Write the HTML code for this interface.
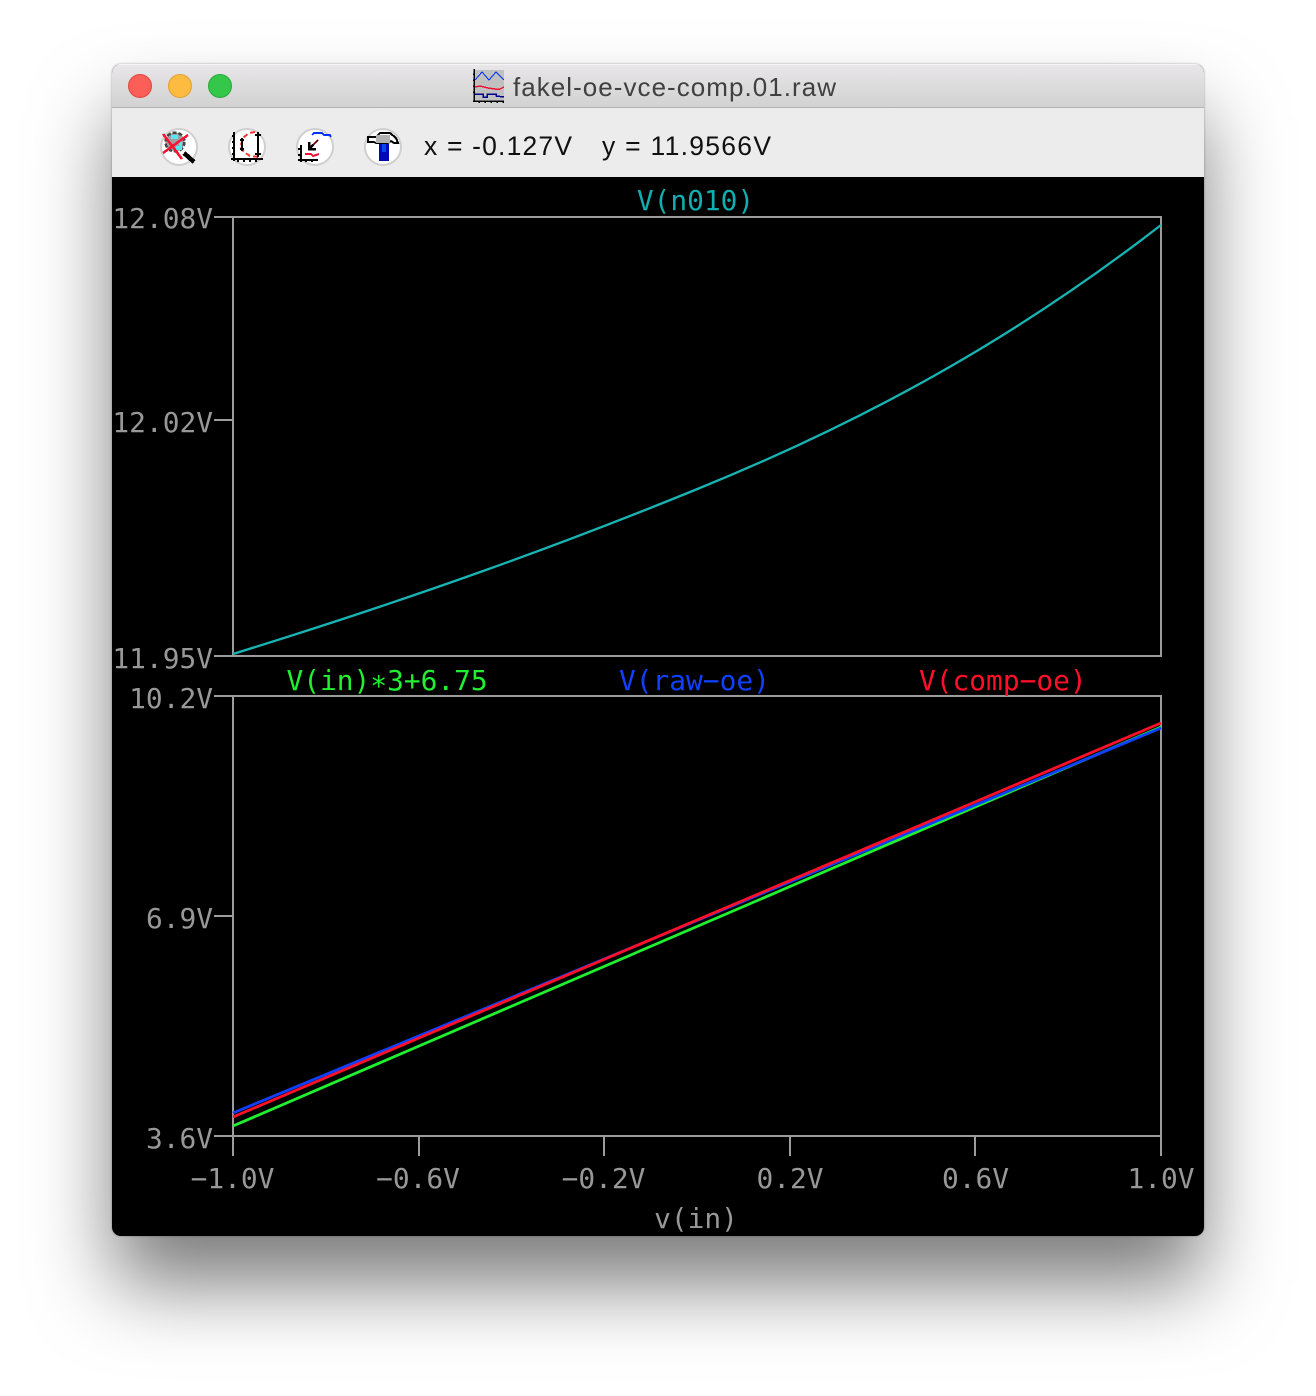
<!DOCTYPE html>
<html><head><meta charset="utf-8"><title>fakel-oe-vce-comp.01.raw</title>
<style>
html,body{margin:0;padding:0;background:#fff;}
body{width:1316px;height:1396px;position:relative;overflow:hidden;}
#win{position:absolute;left:112px;top:64px;width:1092px;height:1172px;border-radius:9px;background:#000;box-shadow:0 50px 80px -2px rgba(0,0,0,.52),0 0 2px rgba(0,0,0,.35);overflow:hidden;}
#tb{position:absolute;left:0;top:0;width:1092px;height:43px;background:linear-gradient(#e9e7e9,#d2d2d2);border-bottom:1px solid #b2b2b2;box-shadow:inset 0 1px 0 #f4f4f4;}
#bar{position:absolute;left:0;top:44px;width:1092px;height:69px;background:#ececec;}
svg{position:absolute;left:0;top:0;}
.m{font-family:"DejaVu Sans Mono","Liberation Mono",monospace;font-size:27.85px;}
.s{font-family:"Liberation Sans",sans-serif;}
.g{fill:#989898;}
</style></head><body>
<div id="win"><div id="tb"></div><div id="bar"></div></div>
<svg width="1316" height="1396" viewBox="0 0 1316 1396">
<!-- traffic lights -->
<circle cx="140" cy="86" r="11.5" fill="#fc5f58" stroke="#e2463f" stroke-width="1"/>
<circle cx="180" cy="86" r="11.5" fill="#fdbc40" stroke="#e1a02f" stroke-width="1"/>
<circle cx="220" cy="86" r="11.5" fill="#34c749" stroke="#28a93a" stroke-width="1"/>
<!-- title icon -->
<g shape-rendering="crispEdges" fill="none">
<rect x="475" y="70" width="29" height="30" fill="#c0c0c0"/>
<path d="M474 69V102M473 101H504M473 74h2M473 80h2M473 86h2M473 92h2M479 101v2M485 101v2M491 101v2M497 101v2M503 101v2" stroke="#000" stroke-width="1.5"/>
<polyline points="475,80 482,72 489,80 496,72 504,80" stroke="#0030ff" stroke-width="1"/>
<polyline points="475,87 480,86 488,88 495,89 500,89 504,87" stroke="#f01030" stroke-width="1.5"/>
<polyline points="475,94 483,94 483,97 487,97 487,94 496,94 496,96 504,97" stroke="#000090" stroke-width="1.5"/>
</g>
<text class="s" x="513" y="96" font-size="26" fill="#404040" textLength="323" lengthAdjust="spacing">fakel-oe-vce-comp.01.raw</text>
<!-- toolbar buttons -->
<g fill="#fff" stroke="#cfcfcf" stroke-width="2">
<circle cx="179" cy="147" r="18"/><circle cx="247" cy="147" r="18"/><circle cx="315" cy="147" r="18"/><circle cx="383" cy="147" r="18"/>
</g>
<!-- icon 1 -->
<g shape-rendering="crispEdges" fill="none">
<circle cx="175" cy="142" r="9.5" fill="#a0a0a0" stroke="#444" stroke-width="2.5" stroke-dasharray="4 2"/>
<path d="M171 135h7v4h-7zM176 146h6v4h-6zM179 141h3v5h-3z" fill="#55e6f2"/>
<path d="M184 153L194 162" stroke="#000" stroke-width="4.5"/>
<path d="M163 134L182 159M163 153L188 135" stroke="#ff1030" stroke-width="2.5"/>
<!-- icon 2 -->
<path d="M234 132V161M231 159H263" stroke="#000" stroke-width="2"/>
<path d="M232 136h2M232 142h2M232 148h2M232 154h2M238 160v2M244 160v2M250 160v2M256 160v2" stroke="#000" stroke-width="2"/>
<polyline points="255,132 249,133 244,137 240,147 244,152 250,156 259,157" stroke="#f53a30" stroke-width="2" stroke-dasharray="5 3"/>
<path d="M242 138V151M258 132V157M240 140h4M240 149h4M255 135h6M255 154h6" stroke="#000" stroke-width="2"/>
<!-- icon 3 -->
<path d="M301 145V162M298 160H318M298 149h3M298 155h3M306 160v2M312 160v2" stroke="#000" stroke-width="2"/>
<polyline points="312,135 314,133 322,133 324,135 330,135 331,137" stroke="#0030ff" stroke-width="2"/>
<polyline points="305,154 311,154 313,156 319,154" stroke="#f01030" stroke-width="2"/>
<path d="M318 140L313 145" stroke="#700000" stroke-width="2"/>
<path d="M313 145L309 149M309 142v7h7" stroke="#000" stroke-width="2.5"/>
<!-- icon 4 -->
<path d="M368 137H376L380 133H390L396 138L398 143H394L391 141L388 143H376L374 142H368z" fill="#fff" stroke="#000" stroke-width="2"/>
<path d="M376 135H390V143H376z" fill="#b0b0b0"/>
<rect x="379" y="144" width="10" height="17" fill="#0008b8"/>
<rect x="382" y="144" width="4" height="8" fill="#0048f0"/>
</g>
<text class="s" x="424" y="155" font-size="26.5" fill="#111" textLength="148" lengthAdjust="spacing">x = -0.127V</text>
<text class="s" x="602" y="155" font-size="26.5" fill="#111" textLength="169" lengthAdjust="spacing">y = 11.9566V</text>
<!-- axes -->
<g fill="none" stroke="#9c9c9c" stroke-width="2" shape-rendering="crispEdges">
<rect x="233" y="217" width="928" height="439"/>
<rect x="233" y="696" width="928" height="440"/>
<path d="M214 217H233M214 420H233M214 656H233M214 696H233M214 916H233M214 1136H233"/>
<path d="M233 1136V1156M419 1136V1156M604 1136V1156M790 1136V1156M975 1136V1156M1161 1136V1156"/>
</g>
<!-- traces -->
<path d="M233 654 C 420 596, 560 545, 695 490 C 860 423, 1010 342, 1161 225" fill="none" stroke="#18b4b4" stroke-width="2.3"/>
<g fill="none" stroke-width="2.8">
<path d="M233 1126 L1161 727" stroke="#20f030"/>
<path d="M233 1113 L1161 728" stroke="#1040ff"/>
<path d="M233 1117 L1161 723" stroke="#ff1028"/>
</g>
<!-- labels -->
<g class="m g" text-anchor="end">
<text x="213" y="228">12.08V</text>
<text x="213" y="432">12.02V</text>
<text x="213" y="668">11.95V</text>
<text x="213" y="708">10.2V</text>
<text x="213" y="928">6.9V</text>
<text x="213" y="1148">3.6V</text>
</g>
<g class="m g" text-anchor="middle">
<text x="232.5" y="1188">−1.0V</text>
<text x="418" y="1188">−0.6V</text>
<text x="603.5" y="1188">−0.2V</text>
<text x="790" y="1188">0.2V</text>
<text x="975.5" y="1188">0.6V</text>
<text x="1161" y="1188">1.0V</text>
<text x="696" y="1228">v(in)</text>
</g>
<text class="m" x="695.5" y="210" text-anchor="middle" fill="#10aeae">V(n010)</text>
<text class="m" x="286.5" y="690" fill="#20f030">V(in)∗3+6.75</text>
<text class="m" x="619" y="690" fill="#1040ff">V(raw−oe)</text>
<text class="m" x="919" y="690" fill="#ff1028">V(comp−oe)</text>
</svg>
</body></html>
